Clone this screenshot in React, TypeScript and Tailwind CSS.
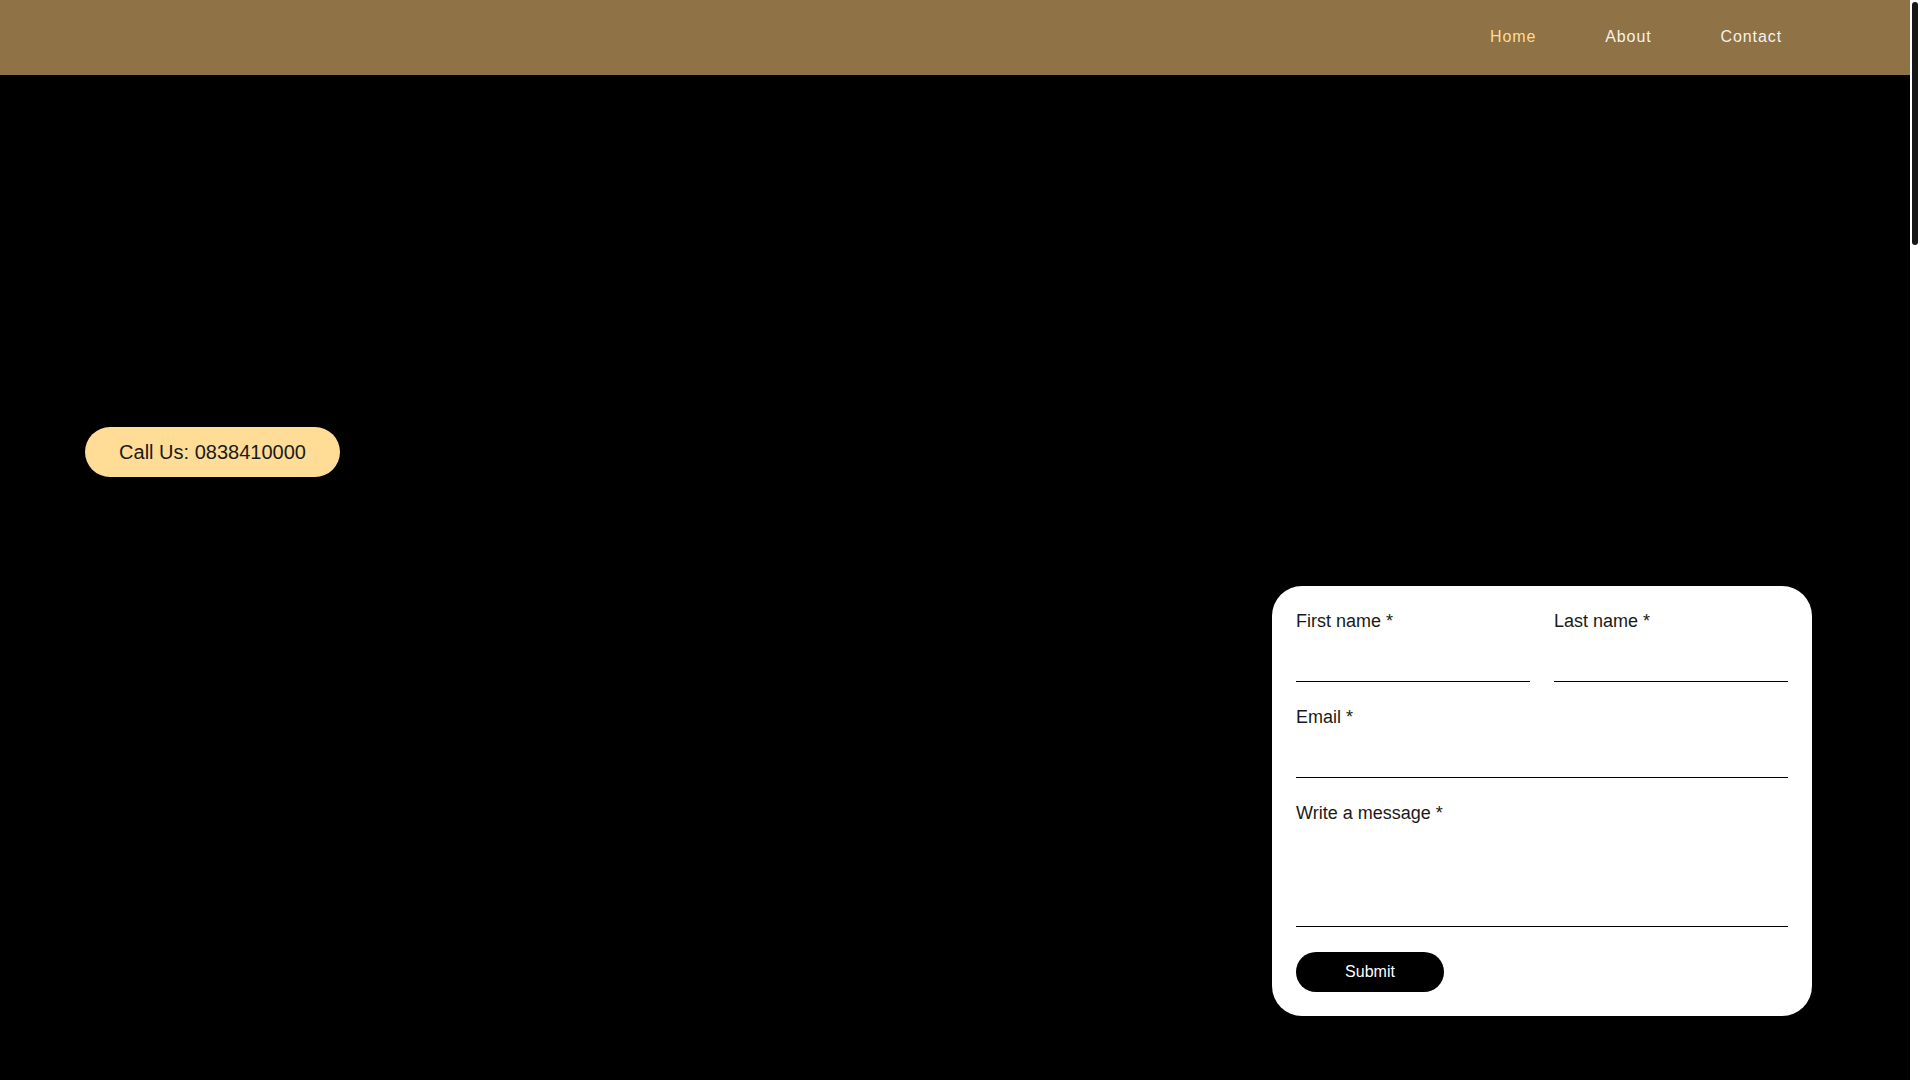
import { useState } from "react";

const navItems = [
  { label: "Home", active: true },
  { label: "About", active: false },
  { label: "Contact", active: false },
];

function Field({
  label,
  multiline = false,
}: {
  label: string;
  multiline?: boolean;
}) {
  const [value, setValue] = useState("");

  return (
    <label className="flex flex-col">
      <span className="text-[18px] leading-[22px] text-[#1a1a1a]">{label} *</span>
      {multiline ? (
        <textarea
          value={value}
          onChange={(e) => setValue(e.target.value)}
          className="h-[103px] resize-none border-b border-black bg-transparent text-[16px] outline-none"
        />
      ) : (
        <input
          value={value}
          onChange={(e) => setValue(e.target.value)}
          className="h-[50px] border-b border-black bg-transparent text-[16px] outline-none"
        />
      )}
    </label>
  );
}

export default function App() {
  return (
    <div className="flex h-screen bg-white font-['Liberation_Sans',Arial,sans-serif]">
      <div className="flex-1 overflow-y-auto bg-black [scrollbar-width:none]">
        <header className="flex h-[75px] items-center justify-end bg-[#8f7245] pb-[2px] pr-[128px]">
          <nav className="flex gap-[69px]">
            {navItems.map((item) => (
              <a
                key={item.label}
                href="#"
                className={`text-[16px] tracking-[0.9px] ${
                  item.active ? "text-[#ffdc94]" : "text-[#f4f1ec]"
                }`}
              >
                {item.label}
              </a>
            ))}
          </nav>
        </header>

        <main>
          {/* Hero */}
          <section className="px-[85px] pt-[352px]">
            <button className="flex h-[50px] w-[255px] items-center justify-center rounded-full bg-[#ffdd97] text-[20px] text-[#1a1a1a]">
              Call Us: 0838410000
            </button>
          </section>

          {/* Contact form */}
          <section className="mt-[109px] flex justify-end pr-[98px]">
            <form
              onSubmit={(e) => e.preventDefault()}
              className="flex w-[540px] flex-col gap-6 rounded-[30px] bg-white p-6"
            >
              <div className="grid grid-cols-2 gap-6">
                <Field label="First name" />
                <Field label="Last name" />
              </div>
              <Field label="Email" />
              <Field label="Write a message" multiline />
              <button
                type="submit"
                className="mt-px h-[40px] w-[148px] rounded-full bg-black text-[16px] text-white"
              >
                Submit
              </button>
            </form>
          </section>

          <div className="h-[3700px]" />
        </main>
      </div>

      {/* page scrollbar as it shows in the capture */}
      <div className="w-[10px] shrink-0 bg-white pt-[2px]">
        <div className="mx-auto h-[243px] w-[6px] rounded-full bg-[#161616]" />
      </div>
    </div>
  );
}
